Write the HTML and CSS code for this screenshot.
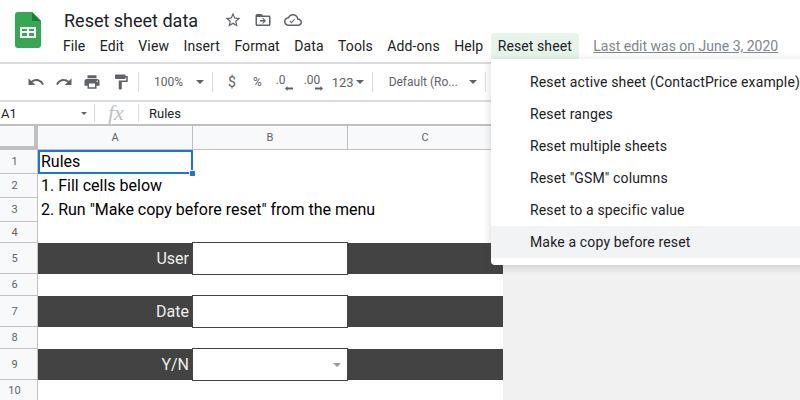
FILE: index.html
```html
<!DOCTYPE html>
<html lang="en">
<head>
    <meta charset="UTF-8">
    <title>Reset sheet data</title>
    <link rel="stylesheet" href="styles.css">
</head>
<body>
<div class="header">
    <svg class="logo" viewBox="0 0 26 36" width="26" height="36">
        <path d="M3 0h14l9 9v24a3 3 0 0 1-3 3H3a3 3 0 0 1-3-3V3a3 3 0 0 1 3-3z" fill="#34a853"/>
        <path d="M17 0l9 9h-9z" fill="#188038"/>
        <path d="M5 15h16v11H5zM7 17v2h5v-2zm7 0v2h5v-2zM7 21v3h5v-3zm7 0v3h5v-3z" fill="#fff" fill-rule="evenodd"/>
    </svg>
    <div class="header-main">
        <div class="title-row">
            <span class="title">Reset sheet data</span>
            <svg class="title-icon" viewBox="0 0 24 24"><path d="M22 9.24l-7.19-.62L12 2 9.19 8.63 2 9.24l5.46 4.73L5.82 21 12 17.27 18.18 21l-1.63-7.03L22 9.24zM12 15.4l-3.76 2.27 1-4.28-3.32-2.88 4.38-.38L12 6.1l1.71 4.04 4.38.38-3.32 2.88 1 4.28L12 15.4z"/></svg>
            <svg class="title-icon" viewBox="0 0 24 24"><path d="M20 6h-8l-2-2H4c-1.1 0-2 .9-2 2v12c0 1.1.9 2 2 2h16c1.1 0 2-.9 2-2V8c0-1.1-.9-2-2-2zm0 12H4V8h16v10zM12 9l-1 1 2 2H8v2h5l-2 2 1 1 4-4z"/></svg>
            <svg class="title-icon" viewBox="0 0 24 24"><path d="M19.35 10.04C18.67 6.59 15.64 4 12 4 9.11 4 6.6 5.64 5.35 8.04 2.34 8.36 0 10.91 0 14c0 3.31 2.69 6 6 6h13c2.76 0 5-2.24 5-5 0-2.64-2.05-4.78-4.65-4.96zM19 18H6c-2.21 0-4-1.79-4-4 0-2.05 1.53-3.76 3.56-3.97l1.07-.11.5-.95C8.08 7.14 9.94 6 12 6c2.62 0 4.88 1.86 5.39 4.43l.3 1.5 1.53.11c1.56.1 2.78 1.41 2.78 2.96 0 1.65-1.35 3-3 3z"/><path d="M10 16.2l-2.6-2.6.9-.9 1.700 1.700 3.700-3.700.9.9z"/></svg>
        </div>
        <div class="menubar">
            <span class="menu-item">File</span>
            <span class="menu-item">Edit</span>
            <span class="menu-item">View</span>
            <span class="menu-item">Insert</span>
            <span class="menu-item">Format</span>
            <span class="menu-item">Data</span>
            <span class="menu-item">Tools</span>
            <span class="menu-item">Add-ons</span>
            <span class="menu-item">Help</span>
            <span class="menu-item open">Reset sheet</span>
            <span class="last-edit">Last edit was on June 3, 2020</span>
        </div>
    </div>
</div>

<div class="toolbar">
    <svg class="tool-icon undo" viewBox="0 0 24 24"><path d="M12.5 8c-2.65 0-5.05.99-6.900 2.600L2 7v9h9l-3.620-3.620c1.390-1.160 3.160-1.880 5.120-1.880 3.540 0 6.550 2.310 7.600 5.500l2.370-.78C21.080 11.030 17.150 8 12.500 8z"/></svg>
    <svg class="tool-icon redo" viewBox="0 0 24 24"><path d="M18.400 10.600C16.550 8.990 14.150 8 11.500 8c-4.650 0-8.580 3.030-9.960 7.220L3.900 16c1.050-3.190 4.050-5.500 7.600-5.500 1.950 0 3.730.72 5.120 1.880L13 16h9V7l-3.600 3.600z"/></svg>
    <svg class="tool-icon print" viewBox="0 0 24 24"><path d="M19 8H5c-1.660 0-3 1.340-3 3v6h4v4h12v-4h4v-6c0-1.660-1.340-3-3-3zm-3 11H8v-5h8v5zm3-7c-.55 0-1-.45-1-1s.45-1 1-1 1 .45 1 1-.45 1-1 1zm-1-9H6v4h12V3z"/></svg>
    <svg class="tool-icon paint" viewBox="0 0 24 24"><path d="M18 4V3c0-.55-.45-1-1-1H5c-.55 0-1 .45-1 1v4c0 .55.45 1 1 1h12c.55 0 1-.45 1-1V6h1v4H9v11c0 .55.45 1 1 1h2c.55 0 1-.45 1-1v-9h8V4h-3z"/></svg>
    <span class="tool-sep"></span>
    <span class="tool-text zoom-level">100%</span>
    <span class="caret zoom-caret"></span>
    <span class="tool-sep"></span>
    <span class="tool-text dollar">$</span>
    <span class="tool-text percent">%</span>
    <span class="decimal less">.0<svg viewBox="0 0 8 5" width="8" height="5"><path d="M0 2.500l2.500-2.500v1.500H8v2H2.500V5z"/></svg></span>
    <span class="decimal more">.00<svg viewBox="0 0 8 5" width="8" height="5"><path d="M8 2.500L5.500 0v1.500H0v2h5.500V5z"/></svg></span>
    <span class="tool-text numfmt">123</span>
    <span class="caret numfmt-caret"></span>
    <span class="tool-sep font-sep"></span>
    <span class="tool-text font-name">Default (Ro...</span>
    <span class="caret font-caret"></span>
    <span class="tool-sep"></span>
</div>

<div class="formula-bar">
    <span class="name-box">A1</span>
    <span class="caret small"></span>
    <span class="formula-sep"></span>
    <span class="fx">fx</span>
    <span class="formula-sep"></span>
    <span class="formula-text">Rules</span>
</div>

<div class="sheet">
    <div class="corner"></div>
    <div class="col-head">A</div>
    <div class="col-head">B</div>
    <div class="col-head">C</div>

    <div class="row-head">1</div>
    <div class="cell selected">Rules<span class="handle"></span></div>
    <div class="cell"></div>
    <div class="cell"></div>

    <div class="row-head">2</div>
    <div class="cell wide">1. Fill cells below</div>

    <div class="row-head">3</div>
    <div class="cell wide">2. Run "Make copy before reset" from the menu</div>

    <div class="row-head">4</div>
    <div class="cell wide"></div>

    <div class="row-head">5</div>
    <div class="band label">User</div>
    <div class="input"></div>
    <div class="band"></div>

    <div class="row-head">6</div>
    <div class="cell wide"></div>

    <div class="row-head">7</div>
    <div class="band label">Date</div>
    <div class="input"></div>
    <div class="band"></div>

    <div class="row-head">8</div>
    <div class="cell wide"></div>

    <div class="row-head">9</div>
    <div class="band label">Y/N</div>
    <div class="input"><span class="caret cell-caret"></span></div>
    <div class="band"></div>

    <div class="row-head">10</div>
    <div class="cell wide"></div>
</div>

<div class="dropdown">
    <div class="drop-item">Reset active sheet (ContactPrice example)</div>
    <div class="drop-item">Reset ranges</div>
    <div class="drop-item">Reset multiple sheets</div>
    <div class="drop-item">Reset "GSM" columns</div>
    <div class="drop-item">Reset to a specific value</div>
    <div class="drop-item hover">Make a copy before reset</div>
</div>
</body>
</html>
```

FILE: styles.css
```css
* {
    box-sizing: border-box;
}

html, body {
    height: 100%;
}

body {
    margin: 0;
    overflow: hidden;
    background-color: #f1f1f1;
    font-family: Roboto, "Liberation Sans", sans-serif;
    color: #202124;
}

.header {
    display: flex;
    height: 62px;
    padding: 12px 0 0 15px;
    background-color: #fff;
}

.logo {
    flex: none;
}

.header-main {
    margin-left: 23px;
    flex: 1;
}

.title-row {
    display: flex;
    align-items: center;
    height: 18px;
}

.title {
    font-size: 18px;
    line-height: 18px;
    width: 160px;
}

.title-icon {
    width: 18px;
    height: 18px;
    margin: 0 12px 3px 0;
    fill: #5f6368;
}

.menubar {
    display: flex;
    align-items: center;
    margin: 3px 0 0 -8px;
    height: 26px;
    font-size: 14px;
}

.menu-item {
    padding: 0 7px;
    height: 26px;
    line-height: 26px;
    margin-right: .45px;
    letter-spacing: .1px;
}

.menu-item.open {
    background-color: #e6f4ea;
    border-radius: 4px 4px 0 0;
}

.last-edit {
    margin-left: 14px;
    color: #80868b;
    text-decoration: underline;
}

.toolbar {
    display: flex;
    align-items: center;
    height: 40px;
    padding-left: 27px;
    background-color: #fff;
    border-top: 2px solid #dadce0;
    border-bottom: 2px solid #dadce0;
}

.tool-icon {
    flex: none;
    width: 18px;
    height: 18px;
    fill: #5f6368;
}

.redo {
    margin-left: 10px;
}

.print {
    margin-left: 10px;
}

.paint {
    margin-left: 11px;
}

.tool-sep {
    flex: none;
    width: 1px;
    height: 20px;
    margin-left: 8px;
    background-color: #dadce0;
}

.tool-text {
    font-size: 12px;
    color: #5f6368;
}

.zoom-level {
    margin-left: 15px;
}

.caret {
    flex: none;
    width: 0;
    height: 0;
    border-left: 4px solid transparent;
    border-right: 4px solid transparent;
    border-top: 4px solid #5f6368;
}

.zoom-caret {
    margin-left: 13px;
}

.dollar {
    margin-left: 15px;
    font-size: 14px;
}

.percent {
    margin-left: 17px;
}

.decimal {
    position: relative;
    margin-left: 14px;
    width: 17px;
    height: 24px;
    line-height: 20px;
    font-size: 12px;
    color: #5f6368;
}

.decimal.more {
    margin-left: 11px;
}

.decimal svg {
    position: absolute;
    top: 16px;
    left: 9px;
    fill: #5f6368;
}

.decimal.more svg {
    left: 11px;
}

.numfmt {
    margin-left: 11px;
    font-size: 13px;
}

.numfmt-caret {
    margin-left: 2px;
}

.font-sep {
    margin-left: 8px;
}

.font-name {
    margin-left: 16px;
    width: 80px;
}

.formula-bar {
    display: flex;
    align-items: center;
    height: 24px;
    background-color: #fff;
    border-bottom: 2px solid #c0c0c0;
    font-size: 13px;
}

.name-box {
    width: 81px;
    padding-left: 1px;
}

.caret.small {
    border-left-width: 3px;
    border-right-width: 3px;
    border-top-width: 3px;
}

.formula-sep {
    flex: none;
    width: 1px;
    height: 18px;
    margin-left: 7px;
    background-color: #dadce0;
}

.fx {
    width: 36px;
    padding-left: 13px;
    font-family: "Liberation Serif", serif;
    font-style: italic;
    font-size: 22px;
    color: #bdc1c6;
}

.formula-text {
    margin-left: 10px;
}

.sheet {
    display: grid;
    grid-template-columns: 38px 155px 155px 155px;
    grid-template-rows: 24px 24px 24px 24px 21px 31px 22px 31px 22px 31px 21px;
    width: 503px;
    background-color: #fff;
    font-size: 16px;
}

.corner {
    background-color: #f8f9fa;
    border-right: 4px solid #c0c0c0;
    border-bottom: 4px solid #c0c0c0;
}

.col-head {
    display: flex;
    align-items: center;
    justify-content: center;
    background-color: #f8f9fa;
    border-right: 1px solid #c0c0c0;
    border-bottom: 1px solid #c0c0c0;
    font-size: 11px;
    color: #5f6368;
}

.row-head {
    display: flex;
    align-items: center;
    justify-content: center;
    padding-right: 8px;
    background-color: #f8f9fa;
    border-right: 1px solid #c0c0c0;
    border-bottom: 1px solid #c0c0c0;
    font-size: 11px;
    color: #5f6368;
}

.cell {
    padding: 0 3px;
    line-height: 23px;
    white-space: nowrap;
    color: #000;
}

.cell.wide {
    grid-column: 2 / 5;
}

.cell.selected {
    position: relative;
    border: 2px solid #1a73e8;
    padding: 0 1px;
    line-height: 20px;
}

.handle {
    position: absolute;
    right: -5px;
    bottom: -5px;
    width: 7px;
    height: 7px;
    background-color: #1a73e8;
    border: 1px solid #fff;
}

.band {
    background-color: #434343;
}

.band.label {
    padding-right: 4px;
    text-align: right;
    line-height: 31px;
    color: #efefef;
}

.input {
    display: flex;
    align-items: center;
    justify-content: flex-end;
    margin: -1px 0 -1px -1px;
    padding-right: 6px;
    background-color: #fff;
    border: 1px solid #434343;
}

.cell-caret {
    border-top-color: #999;
}

.dropdown {
    position: absolute;
    top: 59px;
    left: 491px;
    width: 330px;
    padding: 7px 0;
    background-color: #fff;
    border-radius: 0 0 0 4px;
    box-shadow: 0 2px 6px 2px rgba(60, 64, 67, .15);
    font-size: 14px;
}

.drop-item {
    height: 32px;
    padding-left: 39px;
    line-height: 32px;
    white-space: nowrap;
    letter-spacing: .15px;
}

.drop-item.hover {
    background-color: #f1f3f4;
}
```
